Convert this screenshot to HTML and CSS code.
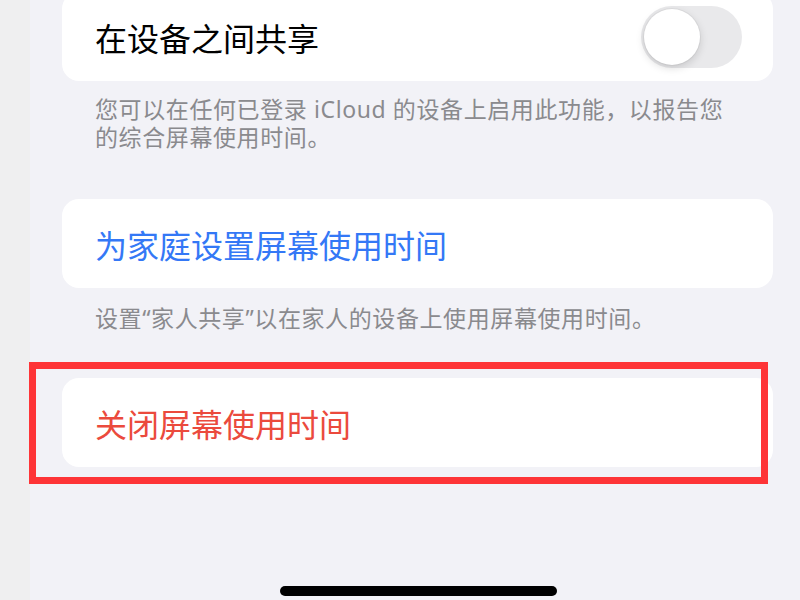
FILE: index.html
```html
<!DOCTYPE html>
<html lang="zh-CN">
<head>
  <meta charset="UTF-8" />
  <title>屏幕使用时间</title>
  <link rel="stylesheet" href="styles.css">
</head>
<body>
  <div class="edge"></div>

  <main class="settings">
    <div class="card card-first">
      <span class="label">在设备之间共享</span>
      <span class="switch"><span class="knob"></span></span>
    </div>
    <p class="note note-first">您可以在任何已登录 iCloud 的设备上启用此功能，以报告您的综合屏幕使用时间。</p>

    <div class="card card-family">
      <span class="label link">为家庭设置屏幕使用时间</span>
    </div>
    <p class="note note-family">设置“家人共享”以在家人的设备上使用屏幕使用时间。</p>

    <div class="card card-off">
      <span class="label danger">关闭屏幕使用时间</span>
      <div class="highlight"></div>
    </div>

    <div class="home-bar"></div>
  </main>
</body>
</html>
```

FILE: styles.css
```css
body {
  margin: 0;
  display: flex;
  height: 600px;
  overflow: hidden;
  background: #f2f2f7;
  font-family: "Noto Sans CJK SC", "Noto Sans", sans-serif;
}
.edge {
  width: 30px;
  flex-shrink: 0;
  background: #efeff0;
}
.settings {
  flex: 1;
  padding: 0 27px 0 32px;
  display: flex;
  flex-direction: column;
}
.card {
  position: relative;
  height: 89px;
  display: flex;
  align-items: center;
  justify-content: space-between;
  padding: 0 31px 0 33px;
  background: white;
  border-radius: 17px;
  box-sizing: border-box;
}
.card-first {
  margin-top: -8px;
}
.card-family {
  margin-top: 48px;
}
.card-off {
  margin-top: 46px;
}
.label {
  font-size: 32px;
  line-height: 40px;
  color: #000;
}
.link {
  color: #3478f6;
}
.danger {
  color: #eb4a3d;
}
.switch {
  width: 101px;
  height: 62px;
  border-radius: 31px;
  background: #e9e9eb;
  display: flex;
  align-items: center;
  padding-left: 3px;
  box-sizing: border-box;
}
.knob {
  width: 56px;
  height: 56px;
  border-radius: 50%;
  background: white;
  box-shadow: 0 3px 8px rgba(0, 0, 0, 0.15), 0 0 0 1px rgba(0, 0, 0, 0.04);
}
.note {
  margin: 0;
  padding: 0 40px 0 33px;
  font-family: "Noto Sans", "Noto Sans CJK SC", sans-serif;
  font-size: 23px;
  line-height: 28px;
  letter-spacing: 0.6px;
  color: #8a8a8e;
}
.note-first {
  padding-top: 14px;
}
.note-family {
  padding-top: 16px;
}
.highlight {
  position: absolute;
  top: -16px;
  left: -33px;
  right: 5px;
  bottom: -17px;
  border: 7px solid #fe3437;
  pointer-events: none;
}
.home-bar {
  width: 277px;
  height: 10px;
  margin: 119px 0 0 218px;
  border-radius: 5px;
  background: #000;
}
```
